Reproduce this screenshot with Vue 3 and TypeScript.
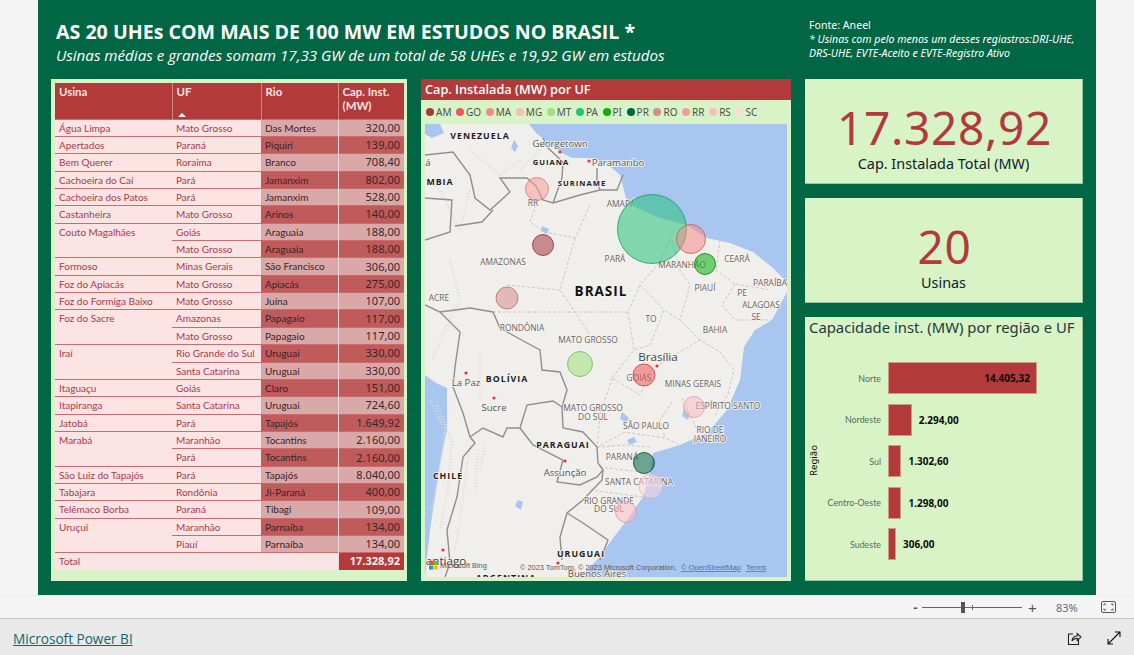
<script setup lang="ts">
interface Row { usina?: string; span?: number; uf: string; rio: string; cap: string }
interface Label { t: string; x: number; y: number; k?: string }

const rows: Row[] = [
  { usina: 'Água Limpa', uf: 'Mato Grosso', rio: 'Das Mortes', cap: '320,00' },
  { usina: 'Apertados', uf: 'Paraná', rio: 'Piquiri', cap: '139,00' },
  { usina: 'Bem Querer', uf: 'Roraima', rio: 'Branco', cap: '708,40' },
  { usina: 'Cachoeira do Caí', uf: 'Pará', rio: 'Jamanxim', cap: '802,00' },
  { usina: 'Cachoeira dos Patos', uf: 'Pará', rio: 'Jamanxim', cap: '528,00' },
  { usina: 'Castanheira', uf: 'Mato Grosso', rio: 'Arinos', cap: '140,00' },
  { usina: 'Couto Magalhães', span: 2, uf: 'Goiás', rio: 'Araguaia', cap: '188,00' },
  { uf: 'Mato Grosso', rio: 'Araguaia', cap: '188,00' },
  { usina: 'Formoso', uf: 'Minas Gerais', rio: 'São Francisco', cap: '306,00' },
  { usina: 'Foz do Apiacás', uf: 'Mato Grosso', rio: 'Apiacás', cap: '275,00' },
  { usina: 'Foz do Formiga Baixo', uf: 'Mato Grosso', rio: 'Juína', cap: '107,00' },
  { usina: 'Foz do Sacre', span: 2, uf: 'Amazonas', rio: 'Papagaio', cap: '117,00' },
  { uf: 'Mato Grosso', rio: 'Papagaio', cap: '117,00' },
  { usina: 'Iraí', span: 2, uf: 'Rio Grande do Sul', rio: 'Uruguai', cap: '330,00' },
  { uf: 'Santa Catarina', rio: 'Uruguai', cap: '330,00' },
  { usina: 'Itaguaçu', uf: 'Goiás', rio: 'Claro', cap: '151,00' },
  { usina: 'Itapiranga', uf: 'Santa Catarina', rio: 'Uruguai', cap: '724,60' },
  { usina: 'Jatobá', uf: 'Pará', rio: 'Tapajós', cap: '1.649,92' },
  { usina: 'Marabá', span: 2, uf: 'Maranhão', rio: 'Tocantins', cap: '2.160,00' },
  { uf: 'Pará', rio: 'Tocantins', cap: '2.160,00' },
  { usina: 'São Luiz do Tapajós', uf: 'Pará', rio: 'Tapajós', cap: '8.040,00' },
  { usina: 'Tabajara', uf: 'Rondônia', rio: 'Ji-Paraná', cap: '400,00' },
  { usina: 'Telêmaco Borba', uf: 'Paraná', rio: 'Tibagi', cap: '109,00' },
  { usina: 'Uruçuí', span: 2, uf: 'Maranhão', rio: 'Parnaíba', cap: '134,00' },
  { uf: 'Piauí', rio: 'Parnaíba', cap: '134,00' },
]

const legend = [
  { uf: 'AM', c: '#a8383c' }, { uf: 'GO', c: '#ee5757' }, { uf: 'MA', c: '#f48a8a' },
  { uf: 'MG', c: '#f9bcbc' }, { uf: 'MT', c: '#9ce27c' }, { uf: 'PA', c: '#25c27c' },
  { uf: 'PI', c: '#0bb00b' }, { uf: 'PR', c: '#006644' }, { uf: 'RO', c: '#d88c8c' },
  { uf: 'RR', c: '#f99c9c' }, { uf: 'RS', c: '#fbbcc4' }, { uf: 'SC', c: '#fbd9de' },
]

// bolhas em coordenadas da própria página (viewBox do mapa)
const bubbles = [
  { x: 652, y: 229, r: 34.5, c: '#25c27c', s: '#159a5e' },
  { x: 691, y: 239, r: 14.5, c: '#f48a8a', s: '#c85a5a' },
  { x: 705, y: 264, r: 10.5, c: '#0bb00b', s: '#0a800a' },
  { x: 537, y: 189, r: 11.5, c: '#f99c9c', s: '#d87a7a' },
  { x: 543, y: 245, r: 10.5, c: '#a8383c', s: '#8c2a2e' },
  { x: 507, y: 298, r: 11, c: '#d88c8c', s: '#b86c6c' },
  { x: 580, y: 364, r: 12.5, c: '#9ce27c', s: '#70b850' },
  { x: 644, y: 375, r: 11, c: '#ee5757', s: '#c83c3c' },
  { x: 694, y: 407, r: 10.5, c: '#fbbcc4', s: '#e0a0a0' },
  { x: 644, y: 463, r: 10.5, c: '#006644', s: '#004a30' },
  { x: 651, y: 486, r: 12, c: '#fbd9de', s: '#e0b4ba' },
  { x: 626, y: 512, r: 10.5, c: '#fbbcc4', s: '#d89a9a' },
]

const labels: Label[] = [
  { t: 'VENEZUELA', x: 480, y: 139, k: 'country' },
  { t: 'Georgetown', x: 560, y: 147, k: 'city' },
  { t: 'GUIANA', x: 551, y: 165, k: 'country small' },
  { t: 'Paramaribo', x: 618, y: 166, k: 'city' },
  { t: 'á', x: 428, y: 166, k: 'city' },
  { t: 'MBIA', x: 440, y: 185, k: 'country' },
  { t: 'SURINAME', x: 582, y: 186, k: 'country small' },
  { t: 'RR', x: 533, y: 206 },
  { t: 'AMAPÁ', x: 621, y: 207 },
  { t: 'AMAZONAS', x: 503, y: 265 },
  { t: 'PARÁ', x: 615, y: 262 },
  { t: 'MARANHÃO', x: 682, y: 268 },
  { t: 'CEARÁ', x: 737, y: 262 },
  { t: 'PIAUÍ', x: 705, y: 291 },
  { t: 'PARAÍBA', x: 770, y: 286 },
  { t: 'PE', x: 742, y: 296 },
  { t: 'ALAGOAS', x: 761, y: 308 },
  { t: 'SE', x: 756, y: 320 },
  { t: 'BRASIL', x: 601, y: 296, k: 'brasil' },
  { t: 'ACRE', x: 439, y: 301 },
  { t: 'TO', x: 651, y: 322 },
  { t: 'BAHIA', x: 715, y: 333 },
  { t: 'RONDÔNIA', x: 522, y: 331 },
  { t: 'MATO GROSSO', x: 588, y: 343 },
  { t: 'Brasília', x: 658, y: 361, k: 'capital' },
  { t: 'BOLÍVIA', x: 507, y: 382, k: 'country' },
  { t: 'La Paz', x: 466, y: 386, k: 'city' },
  { t: 'Sucre', x: 494, y: 411, k: 'city' },
  { t: 'GOIÁS', x: 639, y: 381 },
  { t: 'MINAS GERAIS', x: 693, y: 387 },
  { t: 'MATO GROSSO', x: 593, y: 411 },
  { t: 'DO SUL', x: 593, y: 420 },
  { t: 'ESPÍRITO SANTO', x: 728, y: 409 },
  { t: 'SÃO PAULO', x: 646, y: 429 },
  { t: 'RIO DE', x: 710, y: 433 },
  { t: 'JANEIRO', x: 710, y: 442 },
  { t: 'PARAGUAI', x: 563, y: 448, k: 'country' },
  { t: 'PARANÁ', x: 622, y: 460 },
  { t: 'Assunção', x: 565, y: 476, k: 'city' },
  { t: 'CHILE', x: 448, y: 479, k: 'country' },
  { t: 'SANTA CATARINA', x: 639, y: 485 },
  { t: 'RIO GRANDE', x: 609, y: 504 },
  { t: 'DO SUL', x: 609, y: 512 },
  { t: 'URUGUAI', x: 581, y: 557, k: 'country' },
  { t: 'antiago', x: 446, y: 565, k: 'capital' },
  { t: 'Buenos Aires', x: 597, y: 577, k: 'city' },
  { t: 'ARGENTINA', x: 506, y: 581, k: 'country' },
]

const dots = [[560, 152], [589, 161], [657, 366], [466, 373], [494, 398], [565, 461], [443, 550], [558, 563]]

const land = 'M425 124 L529 124 L537 134 L548 142 L560 152 L572 158 L590 158 L606 163 L620 175 L627 202 L637 208 L660 218 L687 225 L707 238 L730 243 L753 252 L773 268 L787 282 L787 292 L772 320 L755 330 L744 347 L740 380 L727 410 L707 433 L680 445 L653 453 L650 473 L643 497 L627 520 L617 533 L597 560 L587 570 L577 577 L425 577 L427 557 L430 530 L435 497 L440 463 L447 430 L447 388 L436 383 L425 375 Z'
const borders = [
  'M425 155 L453 152 L470 175 L475 198 L490 210 L510 192 L500 178 L527 178 L536 186 L543 200 L553 203 L580 195 L600 190 L617 190 L623 175',
  'M543 138 L548 148 L563 162 L562 178 L553 203',
  'M597 168 L597 182 L600 190',
  'M425 198 L452 200 L450 232 L425 240',
  'M493 210 L482 222 L455 226',
  'M425 305 L440 312 L460 332 L455 367 L453 387 L463 413 L470 437',
  'M440 312 L470 308 L493 312 L500 328 L527 343 L540 350 L542 370 L560 372 L567 390 L562 407 L563 428 L583 432 L597 447 L598 463 L603 470 L602 480 L583 500 L567 513 L560 537 L562 560',
  'M470 437 L483 428 L503 437 L507 428 L520 428 L527 405 L553 401 L562 407',
  'M520 428 L533 445 L563 460 L557 482 L580 485 L597 477 L603 470',
  'M470 437 L475 443 L463 457 L457 497 L447 530 L450 563 L445 577',
  'M567 513 L583 523 L608 540 L600 560',
]
const states = [
  'M536 205 L530 222 L545 232 L575 238 L590 205',
  'M575 238 L560 290 L575 312 L628 312 L640 285 L660 262 L672 235',
  'M507 285 L560 290 M493 312 L575 312 L590 335',
  'M628 312 L634 350 L612 378 L640 395 L650 370 L680 352 L700 340 L720 352 L734 370 L728 394 L715 415',
  'M640 285 L664 310 L650 345 L634 350',
  'M672 240 L680 270 L690 285 L680 320 L664 310',
  'M720 240 L716 270 L735 284 L770 290 M735 284 L722 305 L735 320 L772 320',
  'M680 320 L700 340 M612 378 L600 415 L597 447 L625 432 L665 438 L680 445',
  'M597 447 L625 445 L650 447 M600 467 L640 472 M590 490 L643 497',
  'M682 398 L697 430 M672 402 L660 420 L665 438',
]
const lakes = [
  'M425 124 L440 124 L444 133 L432 138 L425 134 Z',
  'M514 140 L518 146 L515 152 L511 148 Z',
  'M542 226 L549 229 L547 234 L541 231 Z',
  'M518 500 L523 502 L521 510 L515 506 Z',
  'M684 408 L690 414 L688 420 L682 416 Z',
  'M622 412 L629 418 L626 424 L620 418 Z',
  'M627 440 L634 437 L637 442 L630 445 Z',
]
const relief = [
  'M430 400 L445 430 L440 470 L432 510', 'M437 405 L452 440 L448 490 L440 530',
  'M450 260 L460 300 L445 330 L432 360', 'M435 180 L460 230 L470 190',
  'M470 445 L465 480 L460 520 L455 550', 'M478 450 L475 490 M485 445 L480 470',
  'M470 150 L500 175 L520 160', 'M480 350 L480 400', 'M540 150 L520 170',
]

const bars = [
  { name: 'Norte', v: 14405.32, label: '14.405,32' },
  { name: 'Nordeste', v: 2294, label: '2.294,00' },
  { name: 'Sul', v: 1302.6, label: '1.302,60' },
  { name: 'Centro-Oeste', v: 1298, label: '1.298,00' },
  { name: 'Sudeste', v: 306, label: '306,00' },
]
const barW = (v: number) => `${Math.max((v / 14405.32) * 149, 4)}px`
</script>

<template>
  <div class="page">
    <div class="report">
      <header class="head">
        <div class="titles">
          <h1>AS 20 UHEs COM MAIS DE 100 MW EM ESTUDOS NO BRASIL *</h1>
          <p>Usinas médias e grandes somam 17,33 GW de um total de 58 UHEs e 19,92 GW em estudos</p>
        </div>
        <div class="note">
          <div>Fonte: Aneel</div>
          <em>* Usinas com pelo menos um desses regiastros:DRI-UHE, DRS-UHE, EVTE-Aceito e EVTE-Registro Ativo</em>
        </div>
      </header>

      <div class="body">
        <section class="panel table-panel">
          <table>
            <colgroup>
              <col class="c1"><col class="c2"><col class="c3"><col class="c4">
            </colgroup>
            <thead>
              <tr>
                <th>Usina</th>
                <th>UF<span class="sort" /></th>
                <th>Rio</th>
                <th>Cap. Inst.<br>(MW)</th>
              </tr>
            </thead>
            <tbody>
              <tr v-for="(r, i) in rows" :key="i" :class="i % 2 ? 'dark' : 'light'">
                <td v-if="r.usina" class="usina" :rowspan="r.span ?? 1">{{ r.usina }}</td>
                <td class="uf">{{ r.uf }}</td>
                <td class="rio">{{ r.rio }}</td>
                <td class="cap">{{ r.cap }}</td>
              </tr>
            </tbody>
            <tfoot>
              <tr>
                <td colspan="3" class="total">Total</td>
                <td class="grand">17.328,92</td>
              </tr>
            </tfoot>
          </table>
        </section>

        <section class="panel map-panel">
          <h2>Cap. Instalada (MW) por UF</h2>
          <ul class="legend">
            <li v-for="l in legend" :key="l.uf"><i :style="{ background: l.c }" />{{ l.uf }}</li>
          </ul>
          <svg class="map" viewBox="425 124 362 453" width="362" height="453">
            <rect x="425" y="124" width="362" height="453" fill="#a9c6f0" />
            <path :d="land" fill="#f0efec" />
            <path v-for="(d, i) in lakes" :key="i" :d="d" fill="#a9c6f0" />
            <path v-for="(d, i) in relief" :key="i" :d="d" fill="none" stroke="#dddcd9" stroke-width="2.4" stroke-dasharray="1 2" />
            <path v-for="(d, i) in states" :key="i" :d="d" fill="none" stroke="#c4c2be" stroke-width="0.9" stroke-dasharray="3 2" />
            <path v-for="(d, i) in borders" :key="i" :d="d" fill="none" stroke="#8f8f8f" stroke-width="1.4" />
            <circle v-for="(d, i) in dots" :key="i" :cx="d[0]" :cy="d[1]" r="1.6" fill="#d8383c" />
            <text v-for="l in labels" :key="l.t + l.x" :x="l.x" :y="l.y" text-anchor="middle" class="lab" :class="l.k">{{ l.t }}</text>
            <circle
              v-for="b in bubbles" :key="b.x + b.y"
              :cx="b.x" :cy="b.y" :r="b.r"
              :fill="b.c" fill-opacity="0.55" :stroke="b.s" stroke-width="0.8"
            />
            <g>
              <rect x="429" y="561" width="4" height="4" fill="#f25022" />
              <rect x="433.5" y="561" width="4" height="4" fill="#7fba00" />
              <rect x="429" y="565.5" width="4" height="4" fill="#00a4ef" />
              <rect x="433.5" y="565.5" width="4" height="4" fill="#ffb900" />
            </g>
            <text x="440" y="568" class="attr">Microsoft Bing</text>
            <text x="520" y="570" class="attr">© 2023 TomTom, © 2023 Microsoft Corporation,</text>
            <text x="681" y="570" class="attr link">© OpenStreetMap</text>
            <text x="746" y="570" class="attr link">Terms</text>
          </svg>
        </section>

        <div class="side">
          <section class="panel kpi">
            <div class="num">17.328,92</div>
            <div class="cap-label">Cap. Instalada Total (MW)</div>
          </section>
          <section class="panel kpi">
            <div class="num">20</div>
            <div class="cap-label">Usinas</div>
          </section>
          <section class="panel chart">
            <h3>Capacidade inst. (MW) por região e UF</h3>
            <div class="plot">
              <span class="axis">Região</span>
              <div class="bars">
                <div v-for="b in bars" :key="b.name" class="bar-row">
                  <span class="name">{{ b.name }}</span>
                  <div class="bar" :style="{ width: barW(b.v) }">
                    <b v-if="b.v > 10000">{{ b.label }}</b>
                  </div>
                  <b v-if="b.v <= 10000" class="val">{{ b.label }}</b>
                </div>
              </div>
            </div>
          </section>
        </div>
      </div>
    </div>

    <div class="zoombar">
      <span class="zm minus">-</span>
      <div class="slider"><span class="tick" /><span class="thumb" /></div>
      <span class="zm plus">+</span>
      <span class="pct">83%</span>
      <svg class="fit" width="15" height="12" viewBox="0 0 15 12" fill="none" stroke="#4a5a66">
        <rect x="0.5" y="0.5" width="14" height="11" rx="1.5" />
        <path d="M3 4.5V3h2M10 3h2v1.5M12 7.5V9h-2M5 9H3V7.5" />
      </svg>
    </div>

    <footer class="foot">
      <a class="brand">Microsoft Power BI</a>
      <div class="foot-icons">
        <svg width="15" height="15" viewBox="0 0 15 15" fill="none" stroke="#222" stroke-width="1.1">
          <path d="M6 3H1.5v10.5h10V9" />
          <path d="M5 10c.3-3.4 2.4-5 5.2-5V2.6L14 6l-3.8 3.4V7.2C8 7.2 6.3 8 5 10z" />
        </svg>
        <svg width="14" height="14" viewBox="0 0 14 14" fill="none" stroke="#111" stroke-width="1.1">
          <path d="M1 13 13 1M8 1h5v5M1 8v5h5" />
        </svg>
      </div>
    </footer>
  </div>
</template>

<style>
html, body { margin: 0; background: #f3f3f3; }
</style>

<style scoped>
.page {
  width: 1134px;
  height: 655px;
  display: flex;
  flex-direction: column;
  overflow: hidden;
  font-family: "Noto Sans", "Open Sans", sans-serif;
}

.report {
  width: 1058px;
  height: 595px;
  margin-left: 38px;
  padding: 0 13px;
  box-sizing: border-box;
  background: #006644;
  flex: none;
}

.head {
  height: 79px;
  display: flex;
  justify-content: space-between;
  color: #fff;
}
.titles { padding: 20px 0 0 5px; }
.titles h1 {
  margin: 0;
  font: 700 19.6px/24px "Open Sans", sans-serif;
  white-space: nowrap;
}
.titles p {
  margin: 0;
  font: italic 400 15.15px/22px "Open Sans", sans-serif;
  white-space: nowrap;
}
.note {
  width: 274px;
  padding-top: 18px;
  font-size: 10.6px;
  line-height: 14px;
}

.body { display: flex; gap: 14px; height: 502px; }
.panel { background: #d8f3c6; box-sizing: border-box; }

/* tabela */
.table-panel { width: 356px; padding: 4px 3px 0 4px; }
table {
  width: 349px;
  table-layout: fixed;
  border-collapse: collapse;
  font: 10px Lato, "Noto Sans", sans-serif;
  background: #fce4e4;
}
.c1 { width: 117px; }
.c2 { width: 89px; }
.c3 { width: 77px; }
.c4 { width: 66px; }
th {
  box-sizing: border-box;
  height: 36px;
  padding: 2px 4px 0;
  background: #b33a3a;
  color: #f8e6e6;
  font-size: 11.4px;
  font-weight: 700;
  text-align: left;
  vertical-align: top;
  line-height: 13.5px;
  position: relative;
  border-right: 1px solid #cf8a80;
}
th:last-child { border-right: 0; }
.sort {
  position: absolute;
  left: 5px;
  bottom: 2px;
  border: 4px solid transparent;
  border-top: 0;
  border-bottom: 4px solid #fff;
}
tbody tr { height: 17.36px; }
td {
  padding: 0 4px;
  line-height: 16px;
  white-space: nowrap;
  overflow: hidden;
  border-top: 1px solid #cf6a6a;
}
.usina, .uf, .total { color: #a83a4a; vertical-align: top; }
.rio { color: #3a2226; vertical-align: top; }
.cap {
  color: #3d2628;
  text-align: right;
  font: 11px/16px "Noto Sans", sans-serif;
  border-left: 1px solid #eedada;
}
.light .rio, .light .cap { background: #d9a8a8; }
.dark .rio, .dark .cap { background: #bf5b5b; }
tfoot td { height: 17px; vertical-align: top; }
.grand {
  background: #b33a3a;
  color: #fbeeee;
  font: 700 11px/16px "Noto Sans", sans-serif;
  text-align: right;
  border-left: 1px solid #eedada;
}

/* mapa */
.map-panel { width: 370px; padding: 0 0 0 4px; position: relative; }
.map-panel h2 {
  margin: 0 0 0 -4px;
  height: 21px;
  padding-left: 4px;
  background: #b33a3a;
  color: #fff;
  font: 600 12.7px/21px "Open Sans", sans-serif;
}
.legend {
  display: flex;
  gap: 4.6px;
  height: 24px;
  margin: 0;
  padding: 0 0 0 1px;
  list-style: none;
  align-items: center;
  font-size: 10px;
  color: #505050;
}
.legend li { display: flex; align-items: center; gap: 2px; }
.legend i { width: 8px; height: 8px; border-radius: 50%; display: block; }
.map { display: block; }
.lab {
  font-size: 8.4px;
  fill: #6c625e;
  stroke: #f4f3f0;
  stroke-width: 1.6px;
  paint-order: stroke;
  font-family: "Open Sans", sans-serif;
}
.lab.country { font-size: 8.8px; font-weight: 700; letter-spacing: 1px; fill: #1c1c1c; }
.lab.small { font-size: 7.6px; }
.lab.city { font-size: 9.6px; fill: #555; }
.lab.capital { font-size: 11.6px; fill: #444; }
.lab.brasil { font-size: 13.5px; font-weight: 700; letter-spacing: 1px; fill: #111; }
.attr { font: 7.4px "Liberation Sans", sans-serif; fill: #5a5a5a; }
.attr.link { fill: #4a6fb0; text-decoration: underline; }

/* coluna direita */
.side { width: 278px; display: flex; flex-direction: column; gap: 14px; }
.kpi {
  height: 105px;
  flex: none;
  display: flex;
  flex-direction: column;
  align-items: center;
  justify-content: flex-end;
  padding-bottom: 9px;
  border-right: 1px solid #9cc39c;
  border-bottom: 1px solid #9cc39c;
}
.num {
  color: #b33a3a;
  font-size: 46px;
  line-height: 54px;
  letter-spacing: 0.7px;
  margin-left: 2px;
}
.cap-label { color: #10202c; font-size: 14.4px; line-height: 20px; }
.chart {
  height: 264px;
  border-right: 1px solid #9cc39c;
  border-bottom: 1px solid #9cc39c;
  padding: 0 0 0 4px;
}
.chart h3 {
  margin: 0;
  font-size: 14.85px;
  font-weight: 400;
  line-height: 20px;
  color: #1f3a3a;
  white-space: nowrap;
}
.plot { display: flex; margin-top: 25px; }
.axis {
  width: 9px;
  margin-left: -2px;
  writing-mode: vertical-rl;
  transform: rotate(180deg);
  text-align: center;
  font-size: 9.6px;
  color: #111;
  height: 198px;
}
.bars { display: flex; flex-direction: column; gap: 9.5px; }
.bar-row { display: flex; align-items: center; height: 32px; }
.name {
  width: 65px;
  margin-right: 7px;
  text-align: right;
  font: 8.9px Lato, sans-serif;
  color: #5b6b5b;
  white-space: nowrap;
}
.bar {
  height: 100%;
  box-sizing: border-box;
  background: #b33a3a;
  border: 1px solid #d19a85;
  display: flex;
  align-items: center;
  justify-content: flex-end;
  padding-right: 6px;
  flex: none;
}
.bar b, .val { font-size: 10px; font-weight: 700; color: #0a0a0a; }
.val { margin-left: 7px; }

/* rodapé */
.zoombar {
  height: 24px;
  flex: none;
  box-sizing: border-box;
  margin-top: 0;
  border-top: 1px solid #ececec;
  border-bottom: 1px solid #c8c8c8;
  background: #f4f4f4;
  display: flex;
  align-items: center;
  padding-left: 911px;
  color: #4a5a66;
}
.zm { font: 700 13px/1 "Liberation Sans", sans-serif; width: 9px; text-align: center; }
.plus { font-weight: 400; font-size: 15px; }
.slider { position: relative; width: 100px; height: 1px; background: #666; margin: 0 6px 0 2px; }
.thumb {
  position: absolute;
  left: 39px;
  top: -5px;
  width: 4px;
  height: 11px;
  background: #555;
}
.tick { position: absolute; left: 50px; top: -2px; width: 1px; height: 5px; background: #666; }
.pct { margin-left: 19px; font-size: 11px; width: 23px; color: #5f6e78; }
.fit { margin-left: 22px; }
.foot {
  flex: 1;
  background: #e9e9e9;
  display: flex;
  align-items: center;
  justify-content: space-between;
  padding: 3px 13px 0;
}
.brand {
  font: 400 13.6px/18px "Open Sans", sans-serif;
  color: #0e6a70;
  text-decoration: underline;
}
.foot-icons { display: flex; gap: 25px; }
</style>
